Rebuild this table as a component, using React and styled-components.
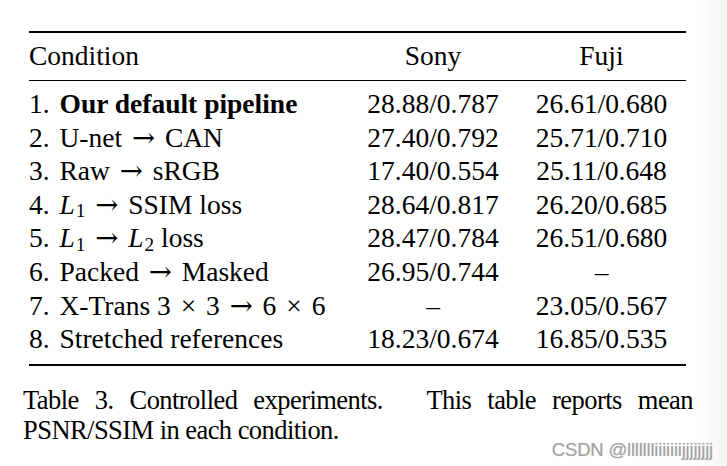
import styled, { createGlobalStyle } from 'styled-components';

const GlobalStyle = createGlobalStyle`
  html, body {
    margin: 0;
    padding: 0;
    background: #fff;
  }
  body {
    font-family: "Liberation Serif", "Times New Roman", serif;
    color: #000;
  }
`;

const Page = styled.div`
  position: relative;
  width: 727px;
  height: 466px;
  padding-top: 31px;
  box-sizing: border-box;
  overflow: hidden;
  background: linear-gradient(to right, #fff 0, #fff 696px, #f4f4f4 727px);
`;

const Table = styled.div`
  margin-left: 29px;
  width: 657px;
  border-top: 2px solid #000;
  border-bottom: 2px solid #000;
  font-size: 27.5px;
  line-height: 33.6px;
`;

const Head = styled.div`
  display: grid;
  grid-template-columns: 320px 168px 1fr;
  padding: 6px 0 7.4px;
  border-bottom: 1px solid #000;
`;

const Body = styled.div`
  padding: 6px 0 8px;
`;

const Row = styled.div`
  display: grid;
  grid-template-columns: 320px 168px 1fr;
`;

const Cell = styled.div`
  white-space: nowrap;
  text-align: ${(p) => (p.$center ? 'center' : 'left')};
`;

// item number; TeX puts a wider space after the period
const Num = styled.span`
  margin-right: 3px;
`;

const Strong = styled.b`
  font-weight: 700;
`;

const Arrow = styled.span`
  font-family: "DejaVu Serif", serif;
  font-size: 1em;
  margin: 0 3px;
`;

const Times = styled.span`
  margin: 0 3px;
`;

const Var = styled.i`
  sub {
    font-style: normal;
    font-size: 0.7em;
    line-height: 0;
    vertical-align: -0.17em;
    margin-left: 1px;
  }
`;

const Caption = styled.p`
  margin: 19px 0 0 23px;
  width: 670px;
  font-size: 26.5px;
  line-height: 30.5px;
  letter-spacing: -0.55px;
  text-align: justify;
  text-align-last: left;
`;

const SentenceGap = styled.span`
  display: inline-block;
  width: 12px;
`;

const Watermark = styled.div`
  position: absolute;
  right: 14px;
  top: 439px;
  font-family: "Liberation Sans", Arial, sans-serif;
  font-size: 18.5px;
  letter-spacing: -0.2px;
  color: #a3a3a3;
  text-shadow: 0 0 1px rgba(160, 160, 160, 0.5);
`;

const A = () => <Arrow>→</Arrow>;
const X = () => <Times>×</Times>;
const L = ({ n }) => (
  <Var>
    L<sub>{n}</sub>
  </Var>
);

const rows = [
  [1, <Strong>Our default pipeline</Strong>, '28.88/0.787', '26.61/0.680'],
  [2, <>U-net <A /> CAN</>, '27.40/0.792', '25.71/0.710'],
  [3, <>Raw <A /> sRGB</>, '17.40/0.554', '25.11/0.648'],
  [4, <><L n="1" /> <A /> SSIM loss</>, '28.64/0.817', '26.20/0.685'],
  [5, <><L n="1" /> <A /> <L n="2" /> loss</>, '28.47/0.784', '26.51/0.680'],
  [6, <>Packed <A /> Masked</>, '26.95/0.744', '–'],
  [7, <>X-Trans 3 <X /> 3 <A /> 6 <X /> 6</>, '–', '23.05/0.567'],
  [8, 'Stretched references', '18.23/0.674', '16.85/0.535'],
];

export default function App() {
  return (
    <>
      <GlobalStyle />
      <Page>
        <Table>
          <Head>
            <Cell>Condition</Cell>
            <Cell $center>Sony</Cell>
            <Cell $center>Fuji</Cell>
          </Head>
          <Body>
            {rows.map(([n, cond, sony, fuji]) => (
              <Row key={n}>
                <Cell>
                  <Num>{n}.</Num> {cond}
                </Cell>
                <Cell $center>{sony}</Cell>
                <Cell $center>{fuji}</Cell>
              </Row>
            ))}
          </Body>
        </Table>
        <Caption>
          Table 3. Controlled experiments. <SentenceGap /> This table reports mean PSNR/SSIM in each condition.
        </Caption>
        <Watermark>CSDN @llllllliiiiiiijjjjjjjj</Watermark>
      </Page>
    </>
  );
}
